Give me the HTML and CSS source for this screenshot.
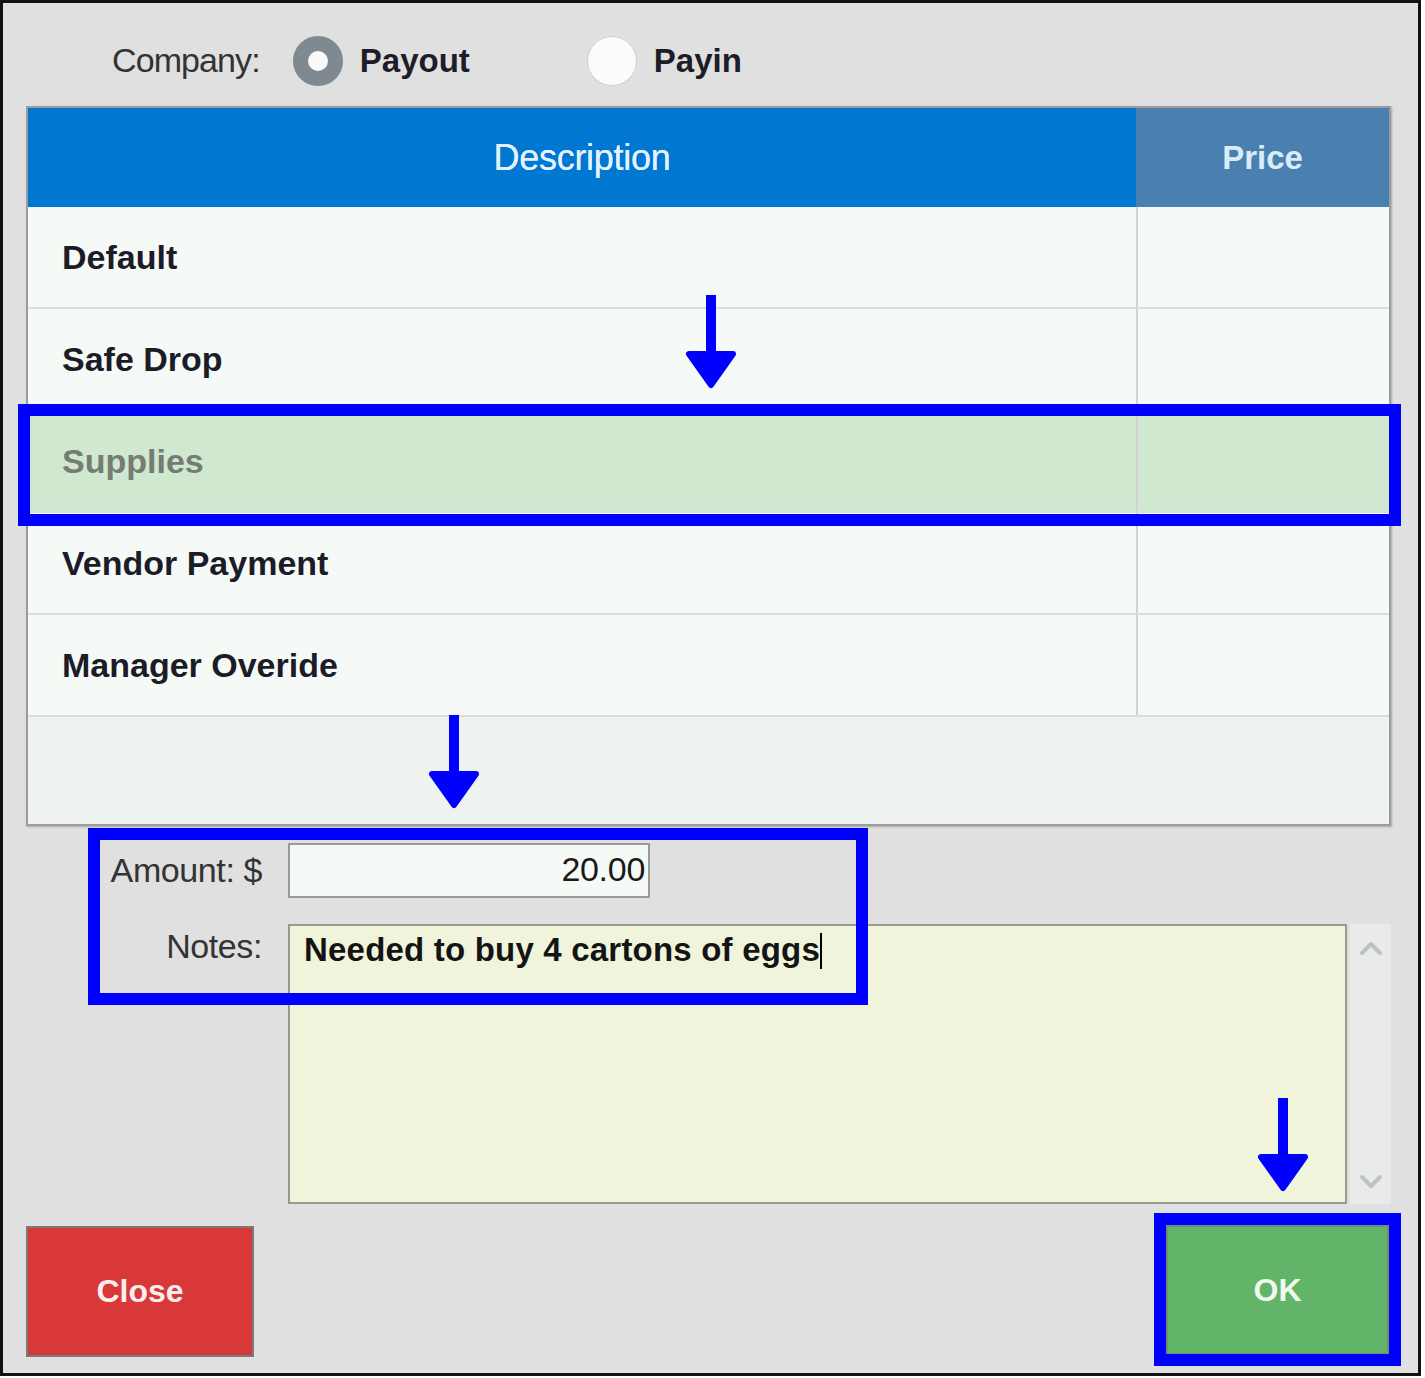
FILE: index.html
```html
<!DOCTYPE html>
<html>
<head>
<meta charset="utf-8">
<link rel="stylesheet" href="styles.css">
</head>
<body>
<div class="frame">
  <div class="company">
    <span class="lbl">Company:</span>
    <span class="radio on"></span><span class="rtext">Payout</span>
    <span class="radio off"></span><span class="rtext">Payin</span>
  </div>
  <div class="table">
    <div class="thead"><div class="c-desc">Description</div><div class="c-price">Price</div></div>
    <div class="row"><div class="c-desc">Default</div><div class="c-price"></div></div>
    <div class="row"><div class="c-desc">Safe Drop</div><div class="c-price"></div></div>
    <div class="row sel"><div class="c-desc">Supplies</div><div class="c-price"></div></div>
    <div class="row"><div class="c-desc">Vendor Payment</div><div class="c-price"></div></div>
    <div class="row"><div class="c-desc">Manager Overide</div><div class="c-price"></div></div>
    <div class="filler"></div>
  </div>
  <div class="form">
    <div class="flabel">Amount: $</div>
    <div class="amount">20.00</div>
    <div class="flabel notes-l">Notes:</div>
    <div class="notes-wrap">
      <div class="notes">Needed to buy 4 cartons of eggs<span class="caret"></span></div>
      <div class="scroll">
        <svg width="24" height="16" viewBox="0 0 24 16"><polyline points="3,13 12,4 21,13" fill="none" stroke="#bfc3bf" stroke-width="4" stroke-linecap="round" stroke-linejoin="round"/></svg>
        <svg width="24" height="16" viewBox="0 0 24 16"><polyline points="3,3 12,12 21,3" fill="none" stroke="#bfc3bf" stroke-width="4" stroke-linecap="round" stroke-linejoin="round"/></svg>
      </div>
    </div>
  </div>
  <div class="buttons">
    <div class="btn close">Close</div>
    <div class="btn ok">OK</div>
  </div>

  <div class="hl hl-row"></div>
  <div class="hl hl-form"></div>
  <div class="hl hl-ok"></div>

  <svg class="arrow a1" width="54" height="94" viewBox="0 0 54 94"><rect x="22" y="0" width="10" height="62" fill="#0000ff"/><polygon points="5,59 49,59 27,90" fill="#0000ff" stroke="#0000ff" stroke-width="6" stroke-linejoin="round"/></svg>
  <svg class="arrow a2" width="54" height="94" viewBox="0 0 54 94"><rect x="22" y="0" width="10" height="62" fill="#0000ff"/><polygon points="5,59 49,59 27,90" fill="#0000ff" stroke="#0000ff" stroke-width="6" stroke-linejoin="round"/></svg>
  <svg class="arrow a3" width="54" height="94" viewBox="0 0 54 94"><rect x="22" y="0" width="10" height="62" fill="#0000ff"/><polygon points="5,59 49,59 27,90" fill="#0000ff" stroke="#0000ff" stroke-width="6" stroke-linejoin="round"/></svg>
</div>
</body>
</html>
```
FILE: styles.css
```css
html, body {
  margin: 0;
  padding: 0;
  background: #ffffff;
}
body {
  font-family: "Liberation Sans", Arial, sans-serif;
}
.frame {
  position: relative;
  box-sizing: border-box;
  width: 1421px;
  height: 1376px;
  border: 3px solid #111;
  background: #e0e0e0;
  padding: 0 27px 0 23px;
}
.company {
  display: flex;
  align-items: center;
  height: 91px;
  padding-top: 12px;
  padding-left: 86px;
}
.company .lbl {
  font-size: 34px;
  color: #333;
  letter-spacing: -0.9px;
  margin-right: 33px;
}
.radio {
  box-sizing: border-box;
  width: 50px;
  height: 50px;
  border-radius: 50%;
  flex: none;
}
.radio.on {
  background: #fafafa;
  border: 15px solid #7e8990;
}
.radio.off {
  background: #fbfbfb;
  border: 1px solid #cfcfcf;
  margin-left: 117px;
}
.rtext {
  font-size: 33px;
  font-weight: bold;
  color: #1d1d28;
  margin-left: 17px;
}
.table {
  box-sizing: border-box;
  width: 1365px;
  height: 720px;
  border: 2px solid #9c9c9c;
  box-shadow: 1px 1px 2px rgba(0,0,0,0.25);
  display: flex;
  flex-direction: column;
  background: #eef3ef;
}
.thead {
  display: flex;
  height: 99px;
  flex: none;
}
.thead .c-desc {
  width: 1108px;
  background: #0078d2;
  color: #e2f2ff;
  font-size: 36px;
  letter-spacing: -0.3px;
  text-shadow: 0 0 0.6px #e2f2ff;
  display: flex;
  align-items: center;
  justify-content: center;
}
.thead .c-price {
  flex: 1;
  background: #4a80b0;
  color: #d9ecf8;
  font-size: 33px;
  font-weight: bold;
  display: flex;
  align-items: center;
  justify-content: center;
}
.row {
  display: flex;
  box-sizing: border-box;
  height: 102px;
  flex: none;
  background: #f6faf7;
  border-bottom: 2px solid #dcdcdc;
}
.row .c-desc {
  width: 1108px;
  box-sizing: border-box;
  padding-left: 34px;
  display: flex;
  align-items: center;
  font-size: 34px;
  font-weight: bold;
  color: #1c1c28;
}
.row .c-price {
  flex: 1;
  border-left: 2px solid #d2d2d2;
}
.row.sel {
  background: #d0e7d0;
}
.row.sel .c-desc {
  color: #747c74;
}
.filler {
  flex: 1;
  background: #eef3ef;
}
.form {
  display: grid;
  grid-template-columns: 236px 1fr;
  column-gap: 26px;
  row-gap: 26px;
  margin-top: 17px;
}
.flabel {
  font-size: 34px;
  color: #333;
  text-align: right;
  letter-spacing: -0.4px;
  align-self: center;
}
.notes-l {
  align-self: start;
  padding-top: 2px;
  line-height: 40px;
}
.amount {
  box-sizing: border-box;
  width: 362px;
  height: 55px;
  background: #f6faf7;
  border: 2px solid #9a9a9a;
  font-size: 34px;
  letter-spacing: -0.3px;
  color: #1a1a1a;
  text-align: right;
  padding-right: 3px;
  line-height: 48px;
}
.notes-wrap {
  display: flex;
  gap: 3px;
}
.notes {
  box-sizing: border-box;
  width: 1059px;
  height: 280px;
  background: #eff4da;
  border: 2px solid #979a90;
  padding: 4px 0 0 14px;
  font-size: 33px;
  font-weight: bold;
  letter-spacing: 0.2px;
  color: #141414;
  line-height: 40px;
}
.caret {
  display: inline-block;
  width: 2px;
  height: 36px;
  background: #000;
  vertical-align: -8px;
}
.scroll {
  width: 41px;
  height: 280px;
  background: #e8ebe8;
  display: flex;
  flex-direction: column;
  justify-content: space-between;
  align-items: center;
  padding: 16px 0 14px;
  box-sizing: border-box;
}
.buttons {
  display: flex;
  justify-content: space-between;
  align-items: flex-start;
  margin-top: 22px;
}
.btn {
  box-sizing: border-box;
  display: flex;
  align-items: center;
  justify-content: center;
  font-size: 32px;
  font-weight: bold;
  border: 2px solid #7a7a7a;
}
.btn.close {
  width: 228px;
  height: 131px;
  background: #d83838;
  color: #fbeeee;
}
.btn.ok {
  width: 223px;
  height: 130px;
  margin-top: -1px;
  margin-right: 2px;
  background: #62b468;
  color: #f1f8ef;
  border-color: #6f8f70;
}
.hl {
  position: absolute;
  box-sizing: border-box;
  border: 12px solid #0000ff;
}
.hl-row {
  left: 15px;
  top: 401px;
  width: 1383px;
  height: 122px;
}
.hl-form {
  left: 85px;
  top: 825px;
  width: 780px;
  height: 177px;
}
.hl-ok {
  left: 1151px;
  top: 1210px;
  width: 247px;
  height: 153px;
}
.arrow {
  position: absolute;
}
.a1 { left: 681px; top: 292px; }
.a2 { left: 424px; top: 712px; }
.a3 { left: 1253px; top: 1095px; }
```
